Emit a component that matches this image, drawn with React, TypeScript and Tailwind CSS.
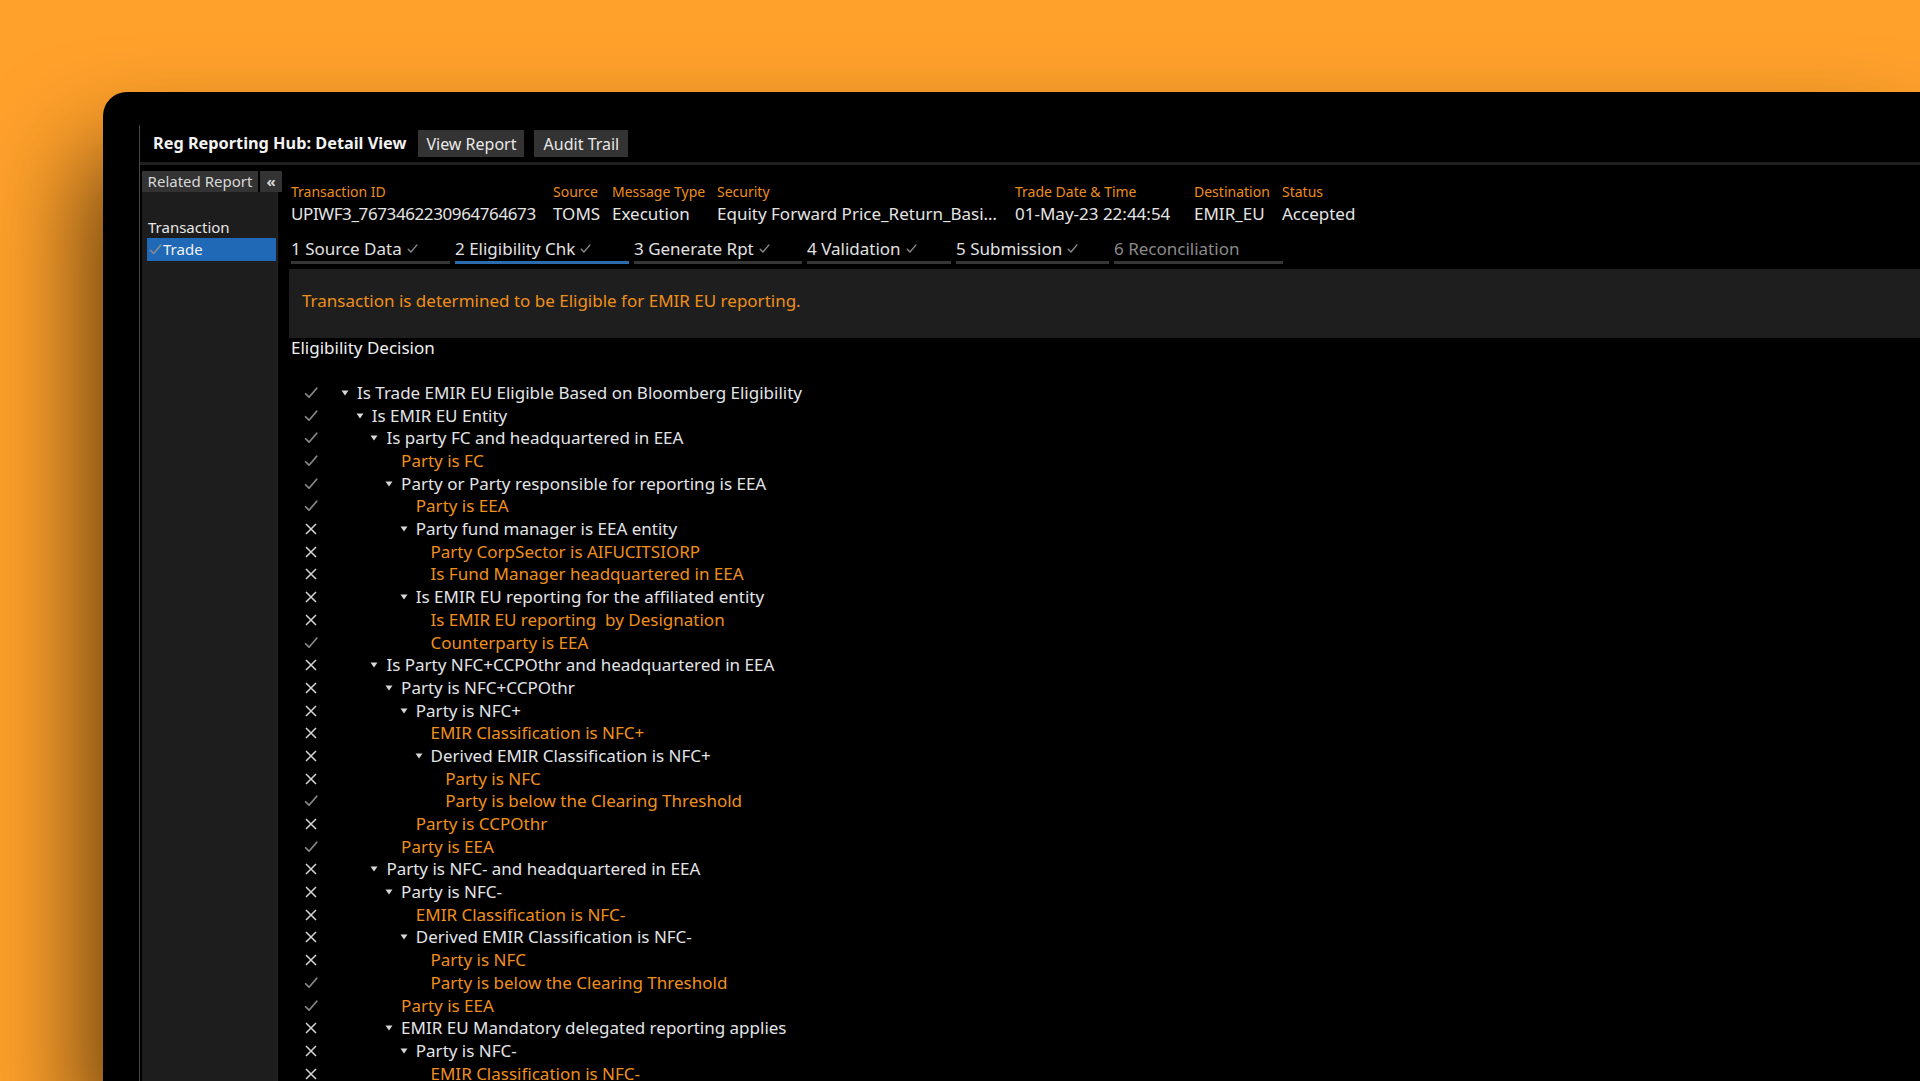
import React from "react";

type Row = [number, string, boolean, boolean];

const tree: Row[] = [
  [0, "Is Trade EMIR EU Eligible Based on Bloomberg Eligibility", true, true],
  [1, "Is EMIR EU Entity", true, true],
  [2, "Is party FC and headquartered in EEA", true, true],
  [3, "Party is FC", false, true],
  [3, "Party or Party responsible for reporting is EEA", true, true],
  [4, "Party is EEA", false, true],
  [4, "Party fund manager is EEA entity", true, false],
  [5, "Party CorpSector is AIFUCITSIORP", false, false],
  [5, "Is Fund Manager headquartered in EEA", false, false],
  [4, "Is EMIR EU reporting for the affiliated entity", true, false],
  [5, "Is EMIR EU reporting  by Designation", false, false],
  [5, "Counterparty is EEA", false, true],
  [2, "Is Party NFC+CCPOthr and headquartered in EEA", true, false],
  [3, "Party is NFC+CCPOthr", true, false],
  [4, "Party is NFC+", true, false],
  [5, "EMIR Classification is NFC+", false, false],
  [5, "Derived EMIR Classification is NFC+", true, false],
  [6, "Party is NFC", false, false],
  [6, "Party is below the Clearing Threshold", false, true],
  [4, "Party is CCPOthr", false, false],
  [3, "Party is EEA", false, true],
  [2, "Party is NFC- and headquartered in EEA", true, false],
  [3, "Party is NFC-", true, false],
  [4, "EMIR Classification is NFC-", false, false],
  [4, "Derived EMIR Classification is NFC-", true, false],
  [5, "Party is NFC", false, false],
  [5, "Party is below the Clearing Threshold", false, true],
  [3, "Party is EEA", false, true],
  [3, "EMIR EU Mandatory delegated reporting applies", true, false],
  [4, "Party is NFC-", true, false],
  [5, "EMIR Classification is NFC-", false, false],
];

const fields: [string, string, number, boolean][] = [
  ["Transaction ID", "UPIWF3_7673462230964764673", 262, true],
  ["Source", "TOMS", 59, false],
  ["Message Type", "Execution", 105, false],
  ["Security", "Equity Forward Price_Return_Basi\u2026", 298, false],
  ["Trade Date & Time", "01-May-23 22:44:54", 179, false],
  ["Destination", "EMIR_EU", 88, false],
  ["Status", "Accepted", 120, false],
];

const tabs: [string, number, boolean, boolean][] = [
  ["1 Source Data", 159, true, false],
  ["2 Eligibility Chk", 174, true, true],
  ["3 Generate Rpt", 168, true, false],
  ["4 Validation", 144, true, false],
  ["5 Submission", 153, true, false],
  ["6 Reconciliation", 169, false, false],
];

function Check({ size = 14, color = "#8a8a8a" }: { size?: number; color?: string }) {
  return (
    <svg width={size} height={size * 0.85} viewBox="0 0 14 12" fill="none">
      <path d="M1.5 6.8 L5 10.3 L12.8 1.2" stroke={color} strokeWidth="1.7" strokeLinecap="round" strokeLinejoin="round" />
    </svg>
  );
}

function XIcon() {
  return (
    <svg width="12" height="12" viewBox="0 0 12 12" fill="none">
      <path d="M1 1 L11 11 M11 1 L1 11" stroke="#d6d6d6" strokeWidth="1.5" />
    </svg>
  );
}

function Tri() {
  return (
    <svg width="8" height="6" viewBox="0 0 8 6">
      <path d="M0.5 0.5 H7.5 L4 5.5 Z" fill="#d8d8d8" />
    </svg>
  );
}

export default function App() {
  return (
    <div className="w-[1920px] h-[1081px] overflow-hidden bg-[#ffa12b] pl-[103px] pt-[92px] font-['Noto_Sans',sans-serif]">
      <div className="h-[1000px] w-full rounded-tl-[24px] bg-black pl-[36px] pt-[33px] shadow-[-20px_60px_100px_rgba(0,0,0,0.6)]">
        <div className="h-full border-l border-[#474747] flex flex-col">
          <header className="h-[37px] flex items-center pl-[13px]">
            <span className="text-[16.3px] font-bold text-[#f2f2f2] whitespace-nowrap">Reg Reporting Hub: Detail View</span>
            <div className="ml-[12px] h-[27px] w-[106px] bg-[#333333] text-[16px] text-[#e8e8e8] flex items-center justify-center">View Report</div>
            <div className="ml-[10px] h-[27px] w-[94px] bg-[#333333] text-[16px] text-[#e8e8e8] flex items-center justify-center">Audit Trail</div>
          </header>
          <div className="h-[3px] bg-[#1f1f1f]" />
          <div className="flex flex-1 pl-[2px]">
            <aside className="w-[140px] flex flex-col shrink-0">
              <div className="flex mt-[6px] h-[21px] gap-[2px]">
                <div className="w-[116px] bg-[#333333] text-[15px] text-[#d8d8d8] flex items-center justify-center whitespace-nowrap">Related Report</div>
                <div className="w-[22px] bg-[#333333] text-[15px] font-bold text-[#d8d8d8] flex items-center justify-center">«</div>
              </div>
              <div className="w-[136px] flex-1 bg-[#1d1d1d] pt-[25px] border-r border-[#262626]">
                <div className="pl-[6px] text-[15px] leading-[20px] text-[#e6e6e6]">Transaction</div>
                <div className="mt-[1px] ml-[5px] mr-[1px] h-[23px] bg-[#1f69b7] flex items-center pl-[2px] text-[15px] text-[#f2f2f2]">
                  <Check size={13} color="#8c8c8c" />
                  <span className="ml-[1px]">Trade</span>
                </div>
              </div>
            </aside>
            <main className="flex-1 pl-[7px] flex flex-col">
              <div className="flex pt-[17px] pl-[2px]">
                {fields.map(([label, value, w, tight]) => (
                  <div key={label} className="flex flex-col shrink-0" style={{ width: w }}>
                    <span className="text-[14px] leading-[20px] text-[#ec8d1c] whitespace-nowrap">{label}</span>
                    <span className={"text-[17px] leading-[24px] text-[#e4e4e4] whitespace-nowrap " + (tight ? "tracking-[-0.4px]" : "")}>{value}</span>
                  </div>
                ))}
              </div>
              <div className="flex gap-[5px] mt-[10px] pl-[2px]">
                {tabs.map(([label, w, done, active]) => (
                  <div
                    key={label}
                    className={
                      "h-[28px] border-b-[3px] flex items-center text-[17px] whitespace-nowrap shrink-0 " +
                      (active ? "border-[#2b6cae] " : "border-[#363636] ") +
                      (done ? "text-[#e2e2e2]" : "text-[#8a8a8a]")
                    }
                    style={{ width: w }}
                  >
                    <span>{label}</span>
                    {done && (
                      <span className="ml-[5px] flex items-center">
                        <Check size={11} color="#8c8c8c" />
                      </span>
                    )}
                  </div>
                ))}
              </div>
              <div className="mt-[5px] h-[69px] bg-[#1e1e1e] pl-[13px] pt-[20px]">
                <span className="text-[17px] leading-[24px] text-[#ee8f1b]">Transaction is determined to be Eligible for EMIR EU reporting.</span>
              </div>
              <div className="pl-[2px] text-[17px] leading-[20px] text-[#f0f0f0]">Eligibility Decision</div>
              <div className="mt-[23.6px] flex flex-col">
                {tree.map(([level, text, hasKids, ok], i) => (
                  <div key={i} className="flex items-center h-[22.7px]">
                    <div className="w-[44px] flex justify-center shrink-0">{ok ? <Check /> : <XIcon />}</div>
                    <div className="shrink-0" style={{ width: 8 + level * 14.7 }} />
                    <div className="w-[16px] shrink-0 flex items-center">{hasKids && <Tri />}</div>
                    <span
                      className={
                        "text-[17px] leading-[22px] whitespace-pre " +
                        (hasKids ? "text-[#e2e4e8]" : "text-[#ef901c]")
                      }
                    >
                      {text}
                    </span>
                  </div>
                ))}
              </div>
            </main>
          </div>
        </div>
      </div>
    </div>
  );
}
